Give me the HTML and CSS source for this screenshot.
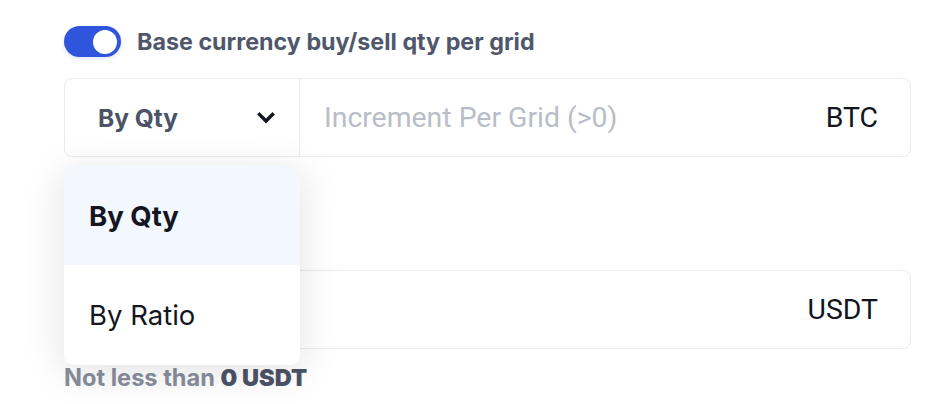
FILE: index.html
```html
<!DOCTYPE html>
<html>
<head>
<meta charset="utf-8">
<link rel="stylesheet" href="styles.css">
</head>
<body>
<div class="form">
  <div class="switch-row">
    <span class="switch"><span class="knob"></span></span>
    <span class="switch-label">Base currency buy/sell qty per grid</span>
  </div>
  <div class="field first">
    <div class="select">
      <span class="select-value">By Qty</span>
      <svg class="chev" width="18" height="12" viewBox="0 0 18 12"><path d="M2.5 2.5 L9 9 L15.5 2.5" fill="none" stroke="#141722" stroke-width="3.4" stroke-linecap="square"/></svg>
    </div>
    <div class="input">
      <span class="placeholder">Increment Per Grid (&gt;0)</span>
      <span class="unit">BTC</span>
    </div>
  </div>
  <div class="spacer"></div>
  <div class="field">
    <div class="input">
      <span class="placeholder"></span>
      <span class="unit">USDT</span>
    </div>
  </div>
  <div class="hint">Not less than <b>0 USDT</b></div>

  <div class="menu">
    <div class="option active">By Qty</div>
    <div class="option">By Ratio</div>
  </div>
</div>
</body>
</html>
```
FILE: styles.css
```css
* { box-sizing: border-box; }
html, body { margin: 0; background: #fff; }
body { width: 942px; height: 404px; overflow: hidden; }
.form {
  position: relative;
  margin-left: 64px;
  width: 847px;
  padding-top: 26px;
  font-family: "Inter", "Lato", sans-serif;
}
.switch-row { display: flex; align-items: center; height: 31px; }
.switch {
  flex: none;
  width: 57px; height: 31px; border-radius: 16px;
  background: #2f55dd;
  display: flex; align-items: center; justify-content: flex-end;
  padding-right: 4px;
  box-shadow: 0 2px 4px rgba(47,85,221,0.15);
}
.knob { width: 24px; height: 24px; border-radius: 50%; background: #fff; }
.switch-label {
  margin-left: 16px;
  font-size: 23.3px; font-weight: 700; color: #50576b;
  white-space: nowrap;
}
.field {
  display: flex;
  height: 79px;
  border: 1.5px solid #e9ebf1;
  border-radius: 8px;
}
.field.first { margin-top: 21px; }
.select {
  width: 235px;
  border-right: 1.5px solid #e9ebf1;
  display: flex; align-items: center; justify-content: space-between;
  padding: 0 24px 0 33px;
}
.select-value { font-size: 24.5px; font-weight: 700; color: #4c5367; }
.chev { display: block; margin-top: 1px; }
.input {
  flex: 1;
  display: flex; align-items: center; justify-content: space-between;
  padding: 0 32px 0 24px;
  font-family: "Roboto", "Liberation Sans", sans-serif;
  font-size: 28.4px;
}
.placeholder { color: #b9bdc8; }
.unit { color: #12151f; }
.spacer { height: 113px; }
.hint {
  margin-top: 14px;
  font-size: 23.6px; font-weight: 700; color: #898e9b;
  white-space: nowrap;
}
.hint b { color: #4c5367; }
.menu {
  position: absolute;
  left: 0; top: 166px;
  width: 236px;
  border-radius: 10px;
  background: #fff;
  overflow: hidden;
  box-shadow: 0 6px 40px rgba(20,25,40,0.13);
}
.option {
  height: 100px;
  display: flex; align-items: center;
  padding-left: 25px;
  font-size: 27.5px; color: #141722;
}
.option.active { background: #f3f7fe; font-weight: 700; height: 99px; }
```
